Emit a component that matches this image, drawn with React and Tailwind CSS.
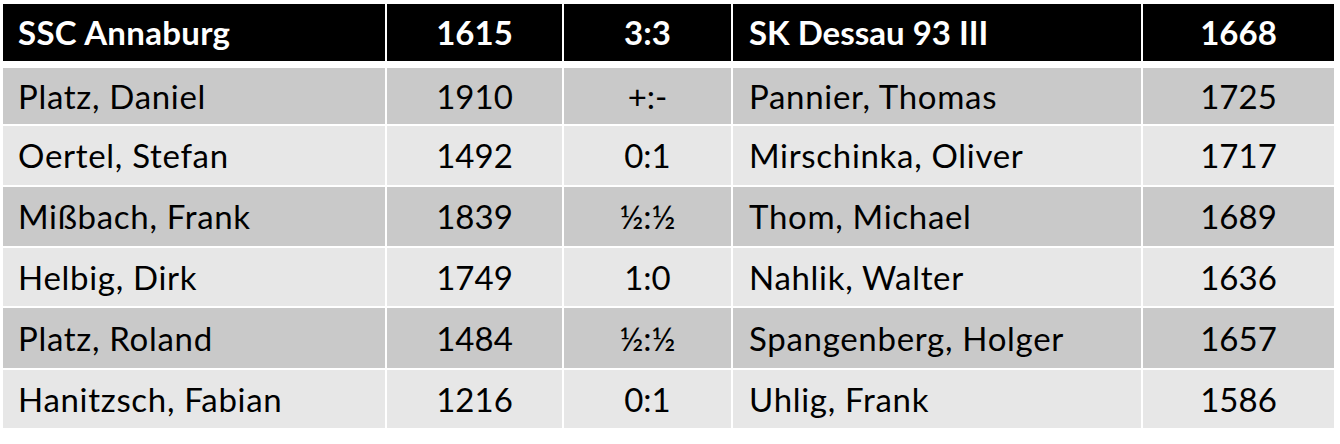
import React from "react";

const rows = [
  { a: "Platz, Daniel", r1: "1910", res: "+:-", b: "Pannier, Thomas", r2: "1725", h: "h-[56px]", bg: "bg-[#c9c9c9]" },
  { a: "Oertel, Stefan", r1: "1492", res: "0:1", b: "Mirschinka, Oliver", r2: "1717", h: "h-[59px]", bg: "bg-[#e7e7e7]" },
  { a: "Mißbach, Frank", r1: "1839", res: "½:½", b: "Thom, Michael", r2: "1689", h: "h-[59px]", bg: "bg-[#c9c9c9]" },
  { a: "Helbig, Dirk", r1: "1749", res: "1:0", b: "Nahlik, Walter", r2: "1636", h: "h-[58px]", bg: "bg-[#e7e7e7]" },
  { a: "Platz, Roland", r1: "1484", res: "½:½", b: "Spangenberg, Holger", r2: "1657", h: "h-[60px]", bg: "bg-[#c9c9c9]" },
  { a: "Hanitzsch, Fabian", r1: "1216", res: "0:1", b: "Uhlig, Frank", r2: "1586", h: "h-[58px]", bg: "bg-[#e7e7e7]" },
];

const cols = "grid grid-cols-[382px_175px_167px_408px_191px] gap-x-[2px]";

export default function App() {
  return (
    <div
      className="w-[1340px] h-[444px] bg-white pt-[4px] pl-[3px] text-[33px] leading-none text-black"
      style={{ fontFamily: "Lato, 'Open Sans', sans-serif" }}
    >
      <div className="w-[1331px] flex flex-col">
        <div className={`${cols} h-[57px] font-bold text-white`}>
          <div className="bg-black flex items-center pl-[15px] tracking-[0.3px]">SSC Annaburg</div>
          <div className="bg-black flex items-center justify-center">1615</div>
          <div className="bg-black flex items-center justify-center">3:3</div>
          <div className="bg-black flex items-center pl-[16px]">SK Dessau 93 III</div>
          <div className="bg-black flex items-center justify-center">1668</div>
        </div>
        <div className="h-[7px]" />
        <div className="flex flex-col gap-y-[2px]">
          {rows.map((r, i) => (
            <div key={i} className={`${cols} ${r.h}`}>
              <div className={`${r.bg} flex items-center pl-[15px] tracking-[0.7px]`}>{r.a}</div>
              <div className={`${r.bg} flex items-center justify-center`}>{r.r1}</div>
              <div className={`${r.bg} flex items-center justify-center`}>{r.res}</div>
              <div className={`${r.bg} flex items-center pl-[16px] tracking-[0.7px]`}>{r.b}</div>
              <div className={`${r.bg} flex items-center justify-center`}>{r.r2}</div>
            </div>
          ))}
        </div>
      </div>
    </div>
  );
}
